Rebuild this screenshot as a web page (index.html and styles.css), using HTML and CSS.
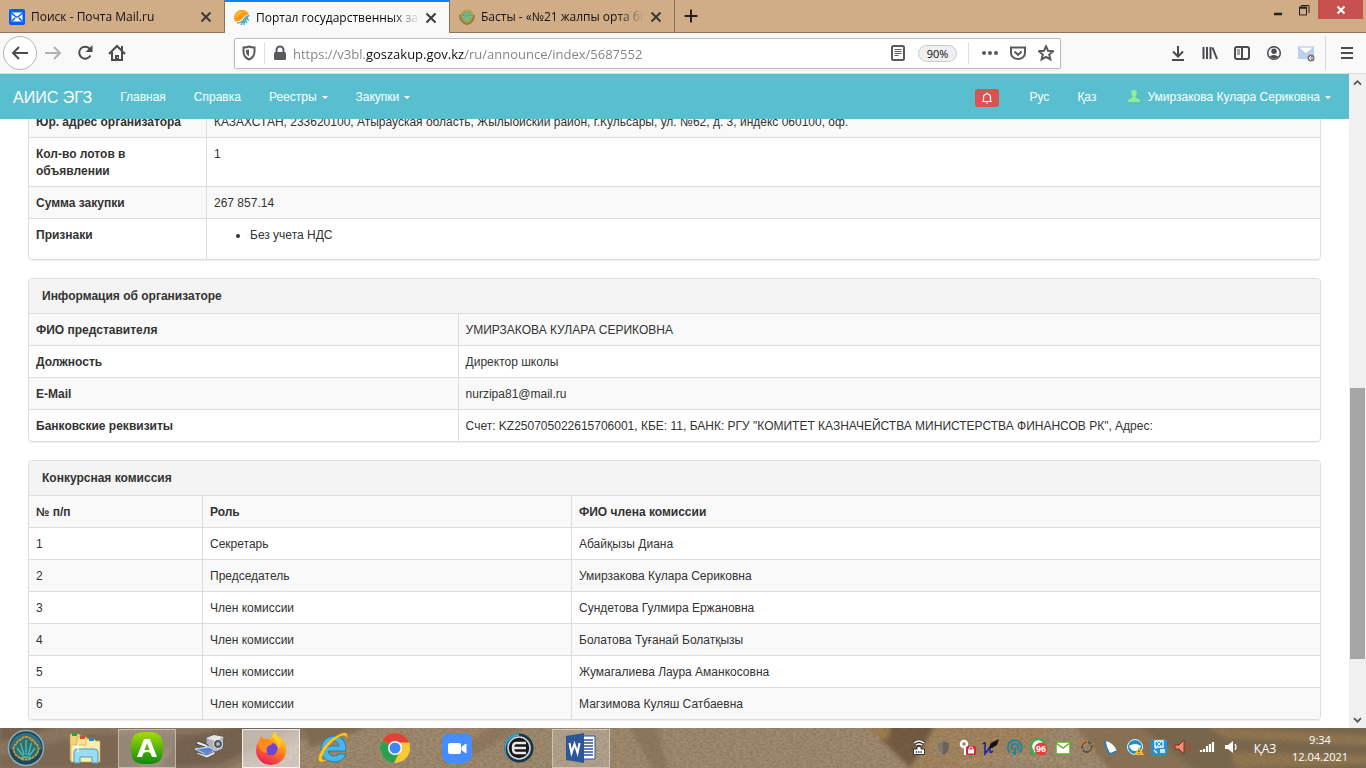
FILE: index.html
```html
<!DOCTYPE html>
<html lang="ru">
<head>
<meta charset="utf-8">
<title>Портал государственных закупок</title>
<link rel="stylesheet" href="styles.css">
</head>
<body>
<div class="desktop">
  <header class="tabbar">
    <div class="tab">
      <svg class="i16" viewBox="0 0 16 16"><rect width="16" height="16" rx="2" fill="#005ff9"/><rect x="2.500" y="3.500" width="11" height="9" fill="#fff"/><path d="M2.500 4l4 3.500q1.500 1.200 3 0l4-3.500M3 12l3.200-3.200M13 12L9.800 8.800" fill="none" stroke="#005ff9" stroke-width="1.500"/></svg>
      <button class="tab-title">Поиск - Почта Mail.ru</button>
      <button class="tab-close" aria-label="Закрыть вкладку"><svg class="i12" viewBox="0 0 12 12"><path d="M1.500 1.500l9 9M10.500 1.500l-9 9"/></svg></button>
    </div>
    <div class="tab tab-active">
      <svg class="i16" viewBox="0 0 16 16"><path d="M1 11.500A7.500 7.500 0 1 1 15 4Q11 5 8.500 8.500Q6 12 1 11.500z" fill="#ff9a0a"/><path d="M2 3q4-4 10-1-6 0-10 7z" fill="#ffb531"/><path d="M3 13q5 0 7-4 2-3 5.500-3.500" fill="none" stroke="#3fa9c4" stroke-width="1.300"/><path d="M7 15q1-3 3-4M10 15q0-3 1-5M13 13q-2-2-1-5M15 10q-2 0-2-3" fill="none" stroke="#3fa9c4" stroke-width="1.400"/></svg>
      <button class="tab-title">Портал государственных закупок</button>
      <button class="tab-close" aria-label="Закрыть вкладку"><svg class="i12" viewBox="0 0 12 12"><path d="M1.500 1.500l9 9M10.500 1.500l-9 9"/></svg></button>
    </div>
    <div class="tab">
      <svg class="i16" viewBox="0 0 16 16"><circle cx="8" cy="8" r="7.500" fill="#b8a043"/><circle cx="8" cy="7.500" r="4.800" fill="#49a89b"/><path d="M8 2v12M4.500 4l7 8M11.500 4l-7 8M3 8h10" stroke="#d2bb55" stroke-width="1"/><circle cx="8" cy="7" r="2" fill="#4fb7aa"/><path d="M1 6q0 7 7 9 7-2 7-9" fill="none" stroke="#95803a" stroke-width="2"/></svg>
      <button class="tab-title">Басты - «№21 жалпы орта білім</button>
      <button class="tab-close" aria-label="Закрыть вкладку"><svg class="i12" viewBox="0 0 12 12"><path d="M1.500 1.500l9 9M10.500 1.500l-9 9"/></svg></button>
    </div>
    <button class="new-tab" aria-label="Новая вкладка"><svg class="i16" viewBox="0 0 16 16"><path d="M8 1.500v13M1.500 8h13" stroke="#222" stroke-width="2"/></svg></button>
    <div class="win-controls">
      <button aria-label="Свернуть"><svg class="i16" viewBox="0 0 16 16"><path d="M4 12h8" stroke="#222" stroke-width="2.500"/></svg></button>
      <button aria-label="Восстановить"><svg class="i16" viewBox="0 0 16 16"><path d="M3.500 6h7v7h-7zM5 3.500h8V11" fill="none" stroke="#222"/><path d="M3 5.500h8" stroke="#222" stroke-width="2"/></svg></button>
      <button class="win-close" aria-label="Закрыть"><svg class="i16" viewBox="0 0 16 16"><path d="M4.500 4.500l7 7M11.500 4.500l-7 7" stroke="#fff" stroke-width="2"/></svg></button>
    </div>
  </header>

  <nav class="toolbar">
    <button class="back" aria-label="Назад"><svg class="i18" viewBox="0 0 18 18"><path d="M17 9H2M8 3L2 9l6 6"/></svg></button>
    <button class="tool tool-off" aria-label="Вперёд"><svg class="i18" viewBox="0 0 18 18"><path d="M1 9h15M10 3l6 6-6 6"/></svg></button>
    <button class="tool" aria-label="Обновить"><svg class="i18" viewBox="0 0 18 18"><path d="M14.500 11.500A6 6 0 1 1 14 5"/><path d="M16.500 1v7h-7z" fill="#4a4a4f" stroke="none"/></svg></button>
    <button class="tool" aria-label="Домой"><svg class="i18" viewBox="0 0 18 18"><path d="M1 10l8-8 8 8M4 8v8h10V8"/><path d="M7 16v-5h4v5z" fill="#4a4a4f" stroke="none"/><path d="M13 2h2v4h-2z" fill="#4a4a4f" stroke="none"/><path d="M9 13.500h1" stroke="#fff" stroke-width="1"/></svg></button>
    <div class="urlbar">
      <button class="url-btn" aria-label="Защита"><svg class="i16" viewBox="0 0 16 16"><path d="M8 1.500c2 1 4 1 5.500 1v4c0 4-2 6.500-5.500 8-3.500-1.500-5.500-4-5.500-8v-4c1.500 0 3.500 0 5.500-1z"/><path d="M8 4.500v7c-2-1-3-3-3-5V5z" fill="#5a5a5e" stroke="none"/></svg></button>
      <span class="sep"></span>
      <button class="url-btn" aria-label="Сведения о сайте"><svg class="i16" viewBox="0 0 16 16"><path d="M4.500 8V5a3.500 3.500 0 0 1 7 0v3"/><rect x="2" y="7" width="12" height="8" rx="1.500" fill="#5a5a5e" stroke="none"/></svg></button>
      <input class="url" type="text" aria-label="Адрес" value="https://v3bl.goszakup.gov.kz/ru/announce/index/5687552">
      <button class="url-btn" aria-label="Режим чтения"><svg class="i16" viewBox="0 0 16 16"><rect x="2" y="1" width="12" height="14" rx="1.500"/><path d="M4.500 4.500h7M4.500 6.500h7M4.500 8.500h7M4.500 10.500h4" stroke-width="1"/></svg></button>
      <button class="zoom">90%</button>
      <span class="sep"></span>
      <div class="url-actions">
        <button class="url-btn" aria-label="Действия"><svg class="i18" viewBox="0 0 18 18"><g fill="#5a5a5e" stroke="none"><circle cx="3" cy="9" r="2"/><circle cx="9" cy="9" r="2"/><circle cx="15" cy="9" r="2"/></g></svg></button>
        <button class="url-btn" aria-label="Pocket"><svg class="i16" viewBox="0 0 16 16"><path d="M1 2.500h14V8a7 6 0 0 1-14 0z"/><path d="M4.500 6.500L8 9.800l3.500-3.300"/></svg></button>
        <button class="url-btn" aria-label="В закладки"><svg class="i16" viewBox="0 0 16 16"><path d="M8 1.200l2 4.600 5 .4-3.800 3.300 1.200 4.900L8 11.800l-4.400 2.600 1.200-4.900L1 6.200l5-.4z"/></svg></button>
      </div>
    </div>
    <div class="tools-right">
      <button class="tool" aria-label="Загрузки"><svg class="i16" viewBox="0 0 16 16"><path d="M8 1v10M3 6.500l5 5 5-5M2 15h12"/></svg></button>
      <button class="tool" aria-label="Библиотека"><svg class="i16" viewBox="0 0 16 16"><path d="M1.500 2v12M5 2v12M8.500 2v12M10.500 2.500l4.500 11.500"/></svg></button>
      <button class="tool" aria-label="Боковая панель"><svg class="i16" viewBox="0 0 16 16"><rect x="1" y="2" width="14" height="12" rx="2"/><path d="M8 2v12"/><path d="M3 5h3M3 7h3M3 9h3" stroke-width="1"/></svg></button>
      <button class="tool" aria-label="Аккаунт"><svg class="i16" viewBox="0 0 16 16"><circle cx="8" cy="8" r="6.300" stroke-width="1.500"/><circle cx="8" cy="6.300" r="2.700" fill="#4a4a4f" stroke="none"/><path d="M3.800 11.500q4.200-3 8.400 0Q8 15.500 3.800 11.500z" fill="#4a4a4f" stroke="none"/></svg></button>
      <button class="tool" aria-label="Почта"><svg class="i18" viewBox="0 0 18 18"><rect x="1" y="3" width="16" height="12" fill="#c0cdec" stroke="none"/><path d="M1 3l8 7 8-7z" fill="#fff" stroke="#b1bfe4" stroke-width="1"/><circle cx="14" cy="14" r="3.500" fill="#74777c" stroke="none"/><path d="M12 14h4M14 12l-2 2 2 2" stroke="#fff" stroke-width="1"/></svg></button>
      <span class="menu-sep"></span>
      <button class="tool menu" aria-label="Меню"><svg class="i16" viewBox="0 0 16 16"><path d="M2 3h12M2 8h12M2 13h12"/></svg></button>
    </div>
  </nav>

  <div class="viewport">
    <div class="page">
      <nav class="navbar">
        <a class="brand" href="#">АИИС ЭГЗ</a>
        <a href="#">Главная</a>
        <a href="#">Справка</a>
        <a class="drop" href="#">Реестры</a>
        <a class="drop" href="#">Закупки</a>
        <div class="nav-right">
          <button class="bell" aria-label="Уведомления"><svg class="i12" viewBox="0 0 12 12"><path d="M1 9.500h10M2.500 9V5.500a3.500 3.500 0 0 1 7 0V9M6 .5v2" fill="none" stroke="#fff" stroke-width="1.200"/><path d="M4.500 10.500h3L6 12z" fill="#fff"/></svg></button>
          <a href="#">Рус</a>
          <a href="#">Қаз</a>
          <a class="drop user" href="#"><svg class="i12" viewBox="0 0 12 12"><path d="M6 0C3.500 0 3 2 3.500 4c.2 1.200.8 1.800 1 2.500 0 1-.5 1.500-1.500 2-2 .7-3 1-3 3.500h12c0-2.500-1-2.800-3-3.500-1-.5-1.500-1-1.500-2 .2-.7.8-1.300 1-2.500C9 2 8.500 0 6 0z" fill="#8ff08f"/></svg>Умирзакова Кулара Сериковна</a>
        </div>
      </nav>
      <main class="content">
        <section class="panel panel-cut">
          <table class="t-info">
            <tr class="odd"><th scope="row">Юр. адрес организатора</th><td>КАЗАХСТАН, 233620100, Атырауская область, Жылыойский район, г.Кульсары, ул. №62, д. 3, индекс 060100, оф.</td></tr>
            <tr><th scope="row">Кол-во лотов в объявлении</th><td>1</td></tr>
            <tr class="odd"><th scope="row">Сумма закупки</th><td>267 857.14</td></tr>
            <tr><th scope="row">Признаки</th><td><ul><li>Без учета НДС</li></ul></td></tr>
          </table>
        </section>
        <section class="panel">
          <h2>Информация об организаторе</h2>
          <table class="t-org">
            <tr class="odd"><th scope="row">ФИО представителя</th><td>УМИРЗАКОВА КУЛАРА СЕРИКОВНА</td></tr>
            <tr><th scope="row">Должность</th><td>Директор школы</td></tr>
            <tr class="odd"><th scope="row">E-Mail</th><td>nurzipa81@mail.ru</td></tr>
            <tr><th scope="row">Банковские реквизиты</th><td>Счет: KZ250705022615706001, КБЕ: 11, БАНК: РГУ "КОМИТЕТ КАЗНАЧЕЙСТВА МИНИСТЕРСТВА ФИНАНСОВ РК", Адрес:</td></tr>
          </table>
        </section>
        <section class="panel">
          <h2>Конкурсная комиссия</h2>
          <table class="t-com">
            <tr class="odd"><th scope="col">№ п/п</th><th scope="col">Роль</th><th scope="col">ФИО члена комиссии</th></tr>
            <tr><td>1</td><td>Секретарь</td><td>Абайқызы Диана</td></tr>
            <tr class="odd"><td>2</td><td>Председатель</td><td>Умирзакова Кулара Сериковна</td></tr>
            <tr><td>3</td><td>Член комиссии</td><td>Сундетова Гулмира Ержановна</td></tr>
            <tr class="odd"><td>4</td><td>Член комиссии</td><td>Болатова Туғанай Болатқызы</td></tr>
            <tr><td>5</td><td>Член комиссии</td><td>Жумагалиева Лаура Аманкосовна</td></tr>
            <tr class="odd"><td>6</td><td>Член комиссии</td><td>Магзимова Куляш Сатбаевна</td></tr>
          </table>
        </section>
      </main>
    </div>
    <div class="scrollbar">
      <svg class="arrow" viewBox="0 0 17 17"><path d="M4.500 11l4-4 4 4" /></svg>
      <div class="track"><div class="thumb"></div></div>
      <svg class="arrow" viewBox="0 0 17 17"><path d="M4.500 7l4 4 4-4" /></svg>
    </div>
  </div>

  <footer class="taskbar">
    <svg class="wood" viewBox="0 0 1366 40" preserveAspectRatio="none">
      <defs><filter id="grain" x="0" y="0" width="100%" height="100%"><feTurbulence type="fractalNoise" baseFrequency=".3 .5" numOctaves="3" seed="4"/><feColorMatrix values="0 0 0 0 .2  0 0 0 0 .14  0 0 0 0 .08  1.200 0 0 0 -.4"/></filter>
      <filter id="soft"><feGaussianBlur stdDeviation="2"/></filter></defs>
      <rect width="1366" height="40" fill="#a08b70"/>
      <g filter="url(#soft)">
        <path d="M-9-9h359L210 49H-9z" fill="#8b7662"/>
        <path d="M0 28L90 6l110 0-70 34H0z" fill="#7b6753"/>
        <path d="M0-9h75L20 10 0 14zM180 10l90-19h50L220 36l-60 4z" fill="#735e4b"/>
        <path d="M300-9h90L310 20z" fill="#806a52"/>
        <path d="M500-9h40l-70 39-30 6z" fill="#907a60"/>
        <path d="M625-9h30l15 58h-12z" fill="#8e7860"/>
        <path d="M870-9h70l-12 23-18 26-8-8-20-20z" fill="#6d563b"/>
        <path d="M878-9h14l-4 21-20-10z" fill="#a37f4d"/>
        <path d="M908 49l30-58h130l-40 29-50 20z" fill="#a5865f"/>
        <path d="M1070-9h306v58h-250z" fill="#77654c"/>
        <path d="M1070-9h60l75 58h-90z" fill="#8a7254"/>
        <path d="M1205-2l20 12 151 8V8zM1230 24l146 4v8l-140 4z" fill="#927750"/>
        <path d="M960 35q50-12 110 0" fill="none" stroke="#b9a078" stroke-width="2"/>
      </g>
      <rect width="1366" height="40" filter="url(#grain)"/>
    </svg>
    <div class="apps">
      <button class="start" aria-label="Пуск"><svg class="i38" viewBox="0 0 38 38"><circle cx="19" cy="19" r="17.500" fill="#1b465c" stroke="#8fabb3" stroke-width="1.500"/><path d="M3 20a16 16 0 0 1 32 0q-16 5-32 0z" fill="#3f7f92" opacity=".7"/><path d="M13 29q-7-4-6.500-10 .5-3 3-4 1-4 4-4 2-3 5.500-3t5.500 3q3 0 4 4 2.500 1 3 4 .5 6-6.500 10l-3 1.500h-6z" fill="#2f6f70" stroke="#d39a35" stroke-width="1.800" stroke-dasharray="3 .6"/><path d="M16 27l-6-8M17 26l-3.500-12M19 26V11M21 26l3.500-12M22 27l6-8" stroke="#4fc0b4" stroke-width="1.300"/><path d="M13.500 29.500q5.500-3 11 0" fill="none" stroke="#57c3ae" stroke-width="1.500"/></svg></button>
      <button aria-label="Проводник"><svg class="i34" viewBox="0 0 34 34"><path d="M2 3h9l2 2h4v24H2z" fill="#eed477" stroke="#b79436" stroke-width=".6"/><path d="M9 6h9l2 2h5v22H9z" fill="#f7e294" stroke="#c29f42" stroke-width=".6"/><path d="M18 8h8l2 2h4v21H3V14h15z" fill="#fbedae" stroke="#c5a54e" stroke-width=".6"/><path d="M4 2h5v3H4z" fill="#25a544"/><path d="M12 5h5v3h-5z" fill="#d04b33"/><path d="M21 7h5v3h-5z" fill="#238bd0"/><path d="M6 32V21q0-3 4-3h16q4 0 4 3v11h-6v-6H12v6z" fill="#9bdcf1" stroke="#4c9bc4"/><path d="M10 12v9M5 16h10" stroke="#fff"/></svg></button>
      <button class="open" aria-label="Arc"><svg class="i34" viewBox="0 0 34 34"><defs><linearGradient id="gr" x2="0" y2="1"><stop stop-color="#a5dc00"/><stop offset="1" stop-color="#0c8b10"/></linearGradient></defs><path d="M17 1c12 0 16 3 16 16s-4 16-16 16S1 30 1 17 5 1 17 1z" fill="url(#gr)"/><path d="M14 8h6l7 18h-5l-1.500-4Q17 20 13.500 22L12 26H7zm3 4l-2.500 7h5z" fill="#fff" fill-rule="evenodd"/></svg></button>
      <button aria-label="Сканер"><svg class="i34" viewBox="0 0 34 34"><path d="M14 7l8-3 10 2-1 12-9 4-8-5z" fill="#aeb2b5" stroke="#55595c"/><path d="M14 7l9 3 9-4-10-2z" fill="#e4e6e7"/><circle cx="26" cy="13" r="4.500" fill="#4d5357" stroke="#eee"/><circle cx="26" cy="13" r="2" fill="#a6b4bb"/><path d="M6 10l10 4v3L4 13z" fill="#e6e9ef" stroke="#444"/><path d="M3 18l14-2 6 3-8 5z" fill="#5987d6" stroke="#dce5f5"/><path d="M4 21l11 3 8-4v3l-8 4-10-4z" fill="#e7e8e9" stroke="#444" stroke-width=".7"/></svg></button>
      <button class="open front" aria-label="Firefox"><svg class="i34" viewBox="0 0 34 34"><defs><linearGradient id="ff" x1=".8" y1="0" x2=".3" y2="1"><stop stop-color="#ffe226"/><stop offset=".45" stop-color="#ff8a1c"/><stop offset="1" stop-color="#f2175b"/></linearGradient></defs><path d="M21 1q2 4 5 6 0-1-.5-2Q33 11 32 20A15 14.500 0 0 1 2 19q0-6 4-10l1-4 3 3q3-1 6 0Q17 4 21 1z" fill="url(#ff)"/><circle cx="17" cy="18" r="6.500" fill="#6c45d4"/><path d="M4 13q1-4 3-5V5l3 3q4-1 6 1l3 3q-1 2-5 3-3 4 0 7-8 0-10-9z" fill="#ff8a20"/><path d="M21 1q-5 4 0 8 4 4 3 9 6-6 0-12z" fill="#ffcf2a"/></svg></button>
      <button aria-label="Internet Explorer"><svg class="i34" viewBox="0 0 34 34"><path d="M30 20H12q1 5 6 5 4 0 5-2h7q-3 8-12 8Q5 30 5 18 6 6 18 5q13 1 12 15zm-7-5q-1-5-5-5-5 0-6 5z" fill="#45b7ec" stroke="#1976ad" stroke-width=".8"/><path d="M31 8q2-9-7-5Q13 8 7 17 1 26 3 30q3 3 9-2-7 3-6-2Q10 14 23 6q7-4 8 2z" fill="#fdc923" stroke="#c68e0c" stroke-width=".5"/></svg></button>
      <button aria-label="Chrome"><svg class="i34" viewBox="0 0 34 34"><circle cx="17" cy="17" r="15" fill="#fbc934"/><path d="M17 17L4 9.500A15 15 0 0 1 31 11.500H17z" fill="#df4337"/><path d="M17 17L4 9.500A15 15 0 0 0 16 32l6-12z" fill="#2c9f50"/><circle cx="17" cy="17" r="7" fill="#fff"/><circle cx="17" cy="17" r="5.500" fill="#4285f4"/></svg></button>
      <button aria-label="Zoom"><svg class="i34" viewBox="0 0 34 34"><rect x="2" y="2" width="30" height="30" rx="8" fill="#468dfb"/><rect x="8" y="12" width="13" height="11" rx="2" fill="#fff"/><path d="M22 16l4-3v9l-4-3z" fill="#fff" stroke="#fff"/></svg></button>
      <button aria-label="Media"><svg class="i34" viewBox="0 0 34 34"><circle cx="17" cy="17" r="14.500" fill="#17364a"/><path d="M17 2.500A14.500 14.500 0 0 0 17 31.500 12 12 0 0 1 17 5z" fill="#31a5dc"/><circle cx="17" cy="17" r="11" fill="#161616" stroke="#d7d9da" stroke-width="1.600"/><path d="M24 12H14q-3 0-3 5t3 5h10M12 17h12" stroke="#e8e8e8" stroke-width="2.500" fill="none"/></svg></button>
      <button class="open" aria-label="Word"><svg class="i34" viewBox="0 0 34 34"><path d="M18 5h13v23H18z" fill="#fff" stroke="#2b579a"/><path d="M20 9h9M20 12h9M20 15h9M20 18h9M20 21h9M20 24h9" stroke="#2b579a" stroke-width="1.300"/><path d="M2 5l18-3v30L2 29z" fill="#2b579a"/><path d="M5.500 12l2 10 3-9 3 9 2-10" fill="none" stroke="#fff" stroke-width="2"/></svg></button>
    </div>
    <div class="tray">
      <svg class="i20" viewBox="0 0 20 20"><path d="M5 5q5-4 10 0M7 7q3-2 6 0" fill="none" stroke="#333" stroke-width="3"/><path d="M5 5q5-4 10 0M7 7q3-2 6 0" fill="none" stroke="#fff" stroke-width="1.400"/><path d="M8 8.500h4V11h3.500v5.500h-11V11H8z" fill="#fff" stroke="#333"/><path d="M6.500 14h7" stroke="#333" stroke-width="1.500" stroke-dasharray="1.500 1"/></svg>
      <svg class="i20" viewBox="0 0 20 20"><path d="M10 3l6 2v5q-1 5-6 7-5-2-6-7V5z" fill="#81776c" stroke="#978d82"/><path d="M10 3v14q5-2 6-7V5z" fill="#6b625a"/></svg>
      <svg class="i20" viewBox="0 0 20 20"><circle cx="7" cy="6" r="3" fill="none" stroke="#fff" stroke-width="2.500"/><path d="M8 8v9M8 13h3" stroke="#fff" stroke-width="2.200"/><rect x="9" y="8" width="10" height="9" rx="2" fill="#d62339"/><path d="M12 12v-1a2 2 0 0 1 4 0v1" fill="none" stroke="#fff"/><rect x="11" y="11.500" width="6" height="4" fill="#fff"/></svg>
      <svg class="i20" viewBox="0 0 20 20"><path d="M2 6q3-3 2 2v8l5-7v5q1 1 3-1" fill="none" stroke="#1421a3" stroke-width="1.500"/><path d="M8 10l2-5 8-4-2 6-5 3z" fill="#111"/></svg>
      <svg class="i20" viewBox="0 0 20 20"><path d="M5 14.500a7 7 0 1 1 9.500 0M8 12a3.500 3.500 0 1 1 4 0M10 9.500V17M8 14l2 3" fill="none" stroke="#28809b" stroke-width="2"/></svg>
      <svg class="i20" viewBox="0 0 20 20"><path d="M3 16l1-3a7 7 0 1 1 3 2z" fill="#fff" stroke="#2fae4c" stroke-width="2"/><circle cx="12" cy="11" r="6.500" fill="#eb3c3b"/><text class="badge" x="12" y="14" text-anchor="middle">96</text></svg>
      <svg class="i20" viewBox="0 0 20 20"><rect x="3" y="4" width="14" height="12" fill="#fff" stroke="#6daa38" stroke-width="1.600"/><path d="M3 5l7 5 7-5" fill="none" stroke="#6daa38" stroke-width="1.500"/></svg>
      <svg class="i20" viewBox="0 0 20 20"><circle cx="10" cy="9" r="5" fill="none" stroke="#475562" stroke-width="2"/><path d="M4 8a6 6 0 0 1 4-5M16 10a6 6 0 0 1-4 5M10 2v5M3 13l3-2M17 5l-3 2" fill="none" stroke="#d47d26" stroke-width="1.500"/></svg>
      <svg class="i20" viewBox="0 0 20 20"><path d="M4 3q8 1 12 10l-7 3Q5 11 4 3z" fill="#fff"/><path d="M4 3q1 8 5 13l7-3" fill="none" stroke="#277fbb" stroke-width="1.800"/></svg>
      <svg class="i20" viewBox="0 0 20 20"><circle cx="10" cy="9" r="7.500" fill="#1b91cc" stroke="#e7f6fc"/><path d="M4 8q6-4 12 0-2 5-6 5T4 8z" fill="#fff"/><path d="M14 9l5 8H9z" fill="#f7bd28"/><path d="M14 12v2M14 15v1" stroke="#333"/></svg>
      <svg class="i20" viewBox="0 0 20 20"><rect x="2" y="1" width="16" height="16" rx="2" fill="#2292d5"/><path d="M6 3h8v6H6zM7 9v2M11 12h5M11 14h5M5 12l3 3" fill="none" stroke="#fff" stroke-width="1.300"/><path d="M8 4l4 4M12 4L8 8" stroke="#fff"/></svg>
      <svg class="i20" viewBox="0 0 20 20"><path d="M2 7h4l5-5v14l-5-5H2z" fill="#f19078" stroke="#8b281d"/><path d="M13 6q2 3 0 6M16 4q3 5 0 10" fill="none" stroke="#a54735" stroke-width="1.300"/></svg>
      <svg class="i20" viewBox="0 0 20 20"><path d="M4 14v-2M7 14v-3M10 14V8M13 14V6M16 14V4" stroke="#fff" stroke-width="2.200"/></svg>
      <svg class="i20" viewBox="0 0 20 20"><path d="M4 7h3l5-4v12l-5-4H4z" fill="#fff"/><path d="M14 6q2 3 0 6" fill="none" stroke="#fff" stroke-width="1.300"/></svg>
    </div>
    <button class="lang">ҚАЗ</button>
    <div class="clock"><span>9:34</span><span>12.04.2021</span></div>
  </footer>
</div>
</body>
</html>
```
FILE: styles.css
```css
* { box-sizing: border-box; }
body { margin: 0; font: 12px/17px "Liberation Sans", Arial, sans-serif; color: #333; }
button { border: 0; padding: 0; background: none; font: inherit; color: inherit; display: flex; align-items: center; justify-content: center; }
a { color: inherit; text-decoration: none; }
svg { display: block; flex: none; }
.i12 { width: 12px; height: 12px; }
.i16 { width: 16px; height: 16px; }
.i18 { width: 18px; height: 18px; }
.i20 { width: 20px; height: 20px; }
.i34 { width: 34px; height: 34px; }
.i38 { width: 38px; height: 38px; }
.desktop { display: flex; flex-direction: column; height: 100vh; overflow: hidden; }

/* tab strip */
.tabbar { display: flex; flex: none; height: 33px; background: #d0ad87; border-bottom: 1px solid #8d7355; color: #111; font: 12px/18px "Open Sans", "Noto Sans", sans-serif; }
.tab { display: flex; align-items: center; gap: 6px; width: 225px; padding: 2px 8px 0 9px; border-right: 1px solid #8d7355; }
.tab-active { height: 33px; padding-top: 0; background: #f9f9fa; border-top: 2px solid #0a84ff; color: #0c0c0d; }
.tab-title { flex: 1; min-width: 0; margin-right: -5px; overflow: hidden; white-space: nowrap; justify-content: flex-start; mask-image: linear-gradient(to right, #000 calc(100% - 28px), transparent); }
.tab-close { width: 20px; height: 20px; }
.tab-close path { fill: none; stroke: #3d3a38; stroke-width: 2; }
.new-tab { width: 32px; }
.win-controls { display: flex; align-items: flex-start; margin-left: auto; padding-right: 3px; }
.win-controls button { width: 26px; height: 19px; }
.win-controls .win-close { width: 45px; margin-left: 1px; background: #c75050; }

/* browser toolbar */
.toolbar { display: flex; align-items: center; flex: none; height: 41px; padding: 0 3px; background: #f9f9fa; border-bottom: 1px solid #dcdcdd; }
.tool, .back { width: 32px; height: 32px; flex: none; }
.tool svg, .back svg { fill: none; stroke: #4a4a4f; stroke-width: 2; }
.back { width: 34px; height: 34px; border: 1px solid #b5b5b7; border-radius: 50%; background: #fff; }
.tool-off { opacity: .4; }
.urlbar { display: flex; align-items: center; flex: 1; min-width: 0; height: 31px; margin-left: 101px; padding: 0 6px; background: #fff; border: 1px solid #bdbdbf; border-radius: 2px; box-shadow: 0 1px 3px #0001; }
.url-btn { width: 16px; height: 24px; flex: none; }
.url-btn svg { fill: none; stroke: #5a5a5e; stroke-width: 2; }
.sep { width: 1px; height: 22px; background: #dedede; margin: 0 7px; }
.url { flex: 1; min-width: 0; border: 0; padding: 2px 0 0; margin-left: 5px; outline: 0; font: 13px/20px "Open Sans", "Noto Sans", sans-serif; color: transparent; background: linear-gradient(to right, #808080 73px, #0c0c0d 73px 172px, #808080 172px); background-clip: text; }
.zoom { width: 39px; height: 17px; margin: 0 4px 0 12px; border: 1px solid #ccc; border-radius: 9px; background: #f0f0f1; color: #0c0c0d; font: 11px/15px "Open Sans", sans-serif; }
.url-actions { display: flex; gap: 12px; padding: 0 0 0 6px; }
.tools-right { display: flex; align-items: center; margin-left: 101px; }
.menu-sep { width: 1px; height: 34px; margin: 0 5px 0 3px; background: #d9d9da; }

/* site */
.viewport { display: flex; flex: 1; min-height: 0; background: #fff; }
.page { display: flex; flex-direction: column; flex: 1; min-width: 0; overflow: hidden; }
.navbar { display: flex; align-items: center; flex: none; height: 45px; padding: 2px 4px 0 0; background: #59bfcf; color: #fff; }
.navbar a { padding: 0 14px; white-space: nowrap; }
.navbar .brand { padding-left: 13px; font-size: 16px; }
.nav-right { display: flex; align-items: center; margin-left: auto; }
.drop::after { content: ""; display: inline-block; margin-left: 5px; vertical-align: middle; border: 3px solid transparent; border-top-color: #fff; border-bottom: 0; }
.user { margin-left: 4px; }
.user svg { display: inline-block; margin-right: 7px; vertical-align: -1px; }
.bell { width: 24px; height: 18px; margin-right: 17px; border-radius: 3px; background: #d9534f; }
.content { flex: 1; min-height: 0; overflow: hidden; padding: 0 28px; }
.panel { margin-bottom: 18px; border: 1px solid #ddd; border-radius: 4px; box-shadow: 0 1px 1px #0001; overflow: hidden; }
.panel-cut { margin-top: -15px; }
h2 { margin: 0; padding: 8px 13px; font-size: 12px; line-height: 18px; background: #f4f4f4; }
table { width: 100%; border-collapse: separate; border-spacing: 0; table-layout: fixed; }
th, td { padding: 8px 7px 6px; border-top: 1px solid #ddd; border-left: 1px solid #ddd; text-align: left; vertical-align: top; overflow-wrap: break-word; }
th:first-child, td:first-child { border-left: 0; }
.odd { background: #f9f9f9; }
.t-info th { width: 177px; }
.t-org th { width: 33.2%; }
.t-com th:nth-child(1) { width: 173px; }
.t-com th:nth-child(2) { width: 369px; }
ul { margin: 0 0 9px; padding-left: 36px; }

.scrollbar { display: flex; flex-direction: column; flex: none; width: 17px; padding: 0 1px; background: #f0f0f0; }
.arrow { width: 15px; height: 17px; }
.arrow path { fill: none; stroke: #555; stroke-width: 2; }
.track { flex: 1; display: grid; grid-template-rows: 297fr 271fr 52fr; }
.thumb { grid-row: 2; background: #a6a6a6; }

/* taskbar */
.taskbar { position: relative; display: flex; align-items: center; flex: none; height: 40px; color: #fff; font: 12px/17px "Open Sans", "Noto Sans", sans-serif; }
.wood { position: absolute; inset: 0; width: 100%; height: 100%; }
.apps, .tray, .lang, .clock { position: relative; }
.apps { display: flex; gap: 4px; }
.apps button { width: 58px; height: 39px; }
.apps .start { width: 52px; }
.apps .open { background: #fff3; border: 1px solid #fff6; }
.apps .front { background: #fff8; border-color: #fffc; }
.tray { display: flex; gap: 4px; margin-left: auto; }
.badge { font: bold 9px "Liberation Sans", sans-serif; fill: #fff; }
.lang { width: 48px; }
.clock { display: flex; flex-direction: column; align-items: center; width: 62px; margin-right: 15px; font-size: 11px; }
```
